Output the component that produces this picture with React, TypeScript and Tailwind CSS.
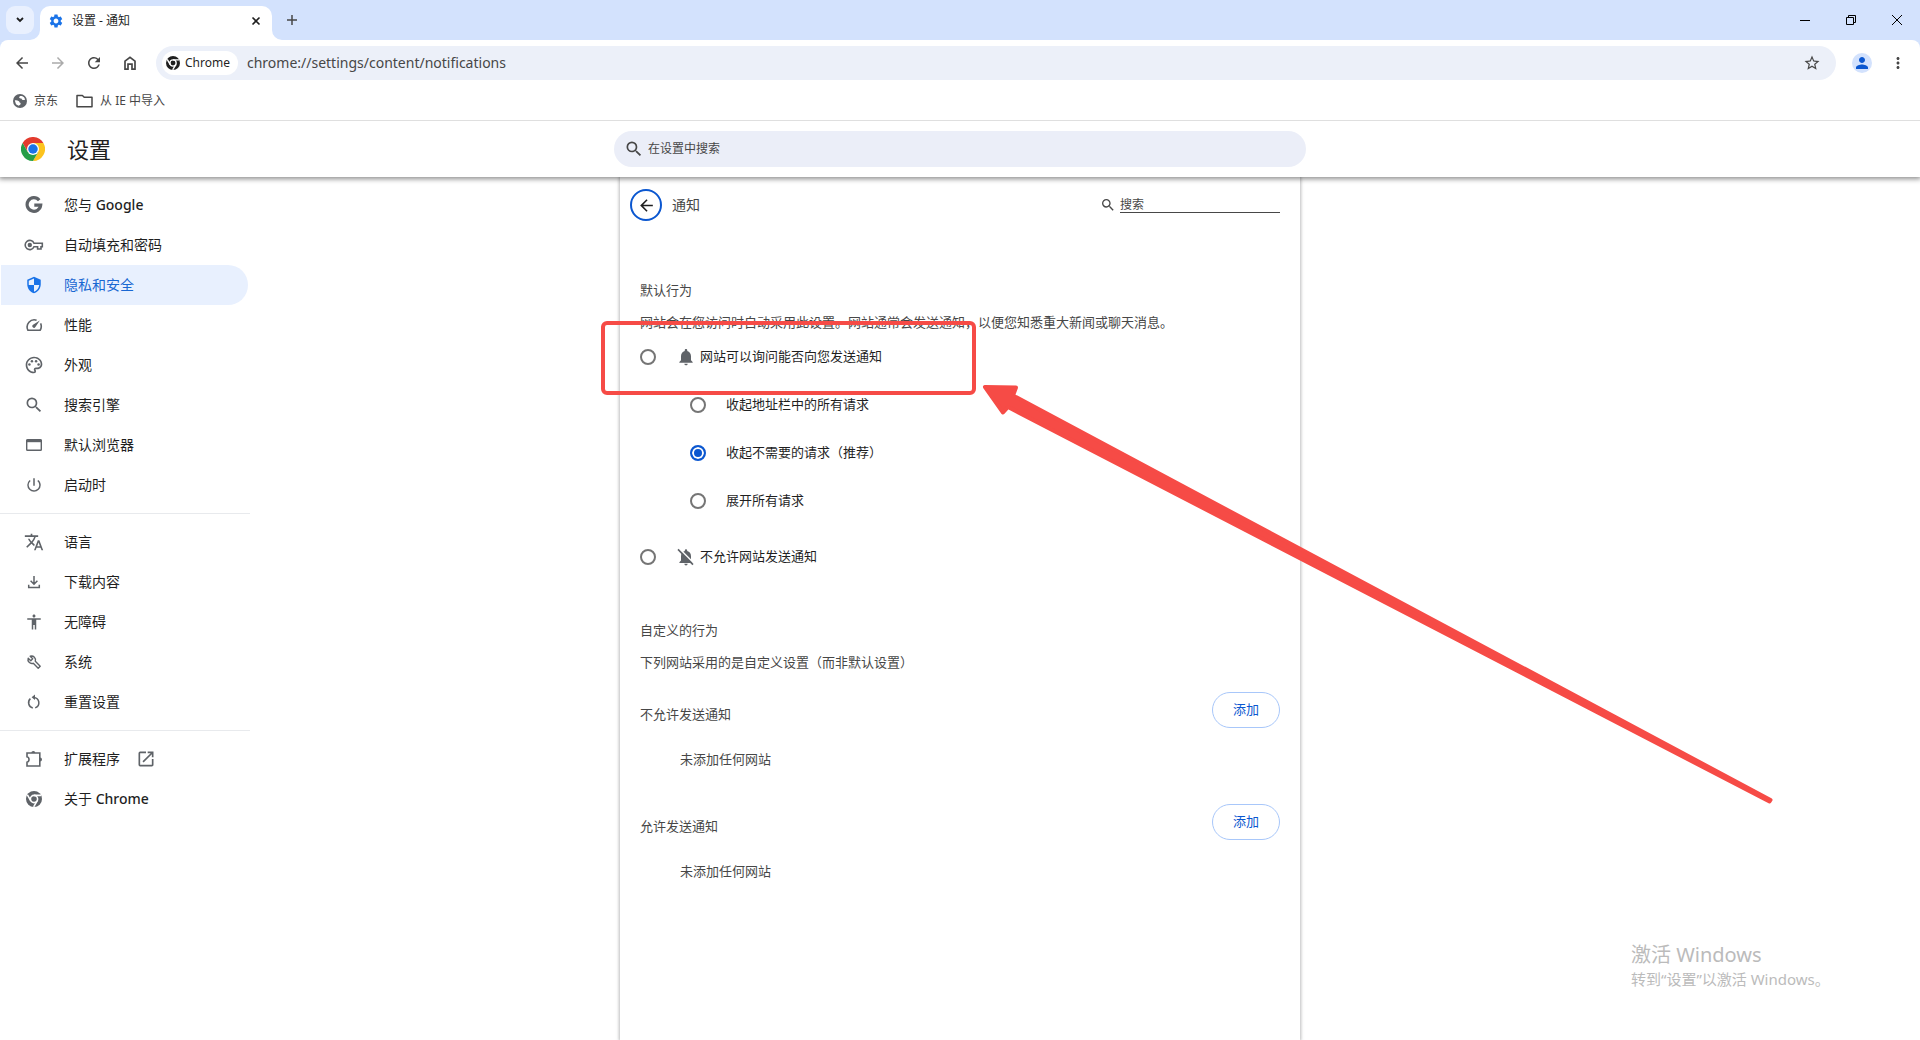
import { useState } from 'react'
import type { ReactNode } from 'react'
import {
  MdAccessibility,
  MdArrowBack,
  MdArrowForward,
  MdMoreVert,
  MdNotifications,
  MdOpenInNew,
  MdOutlinePalette,
  MdPerson,
  MdPowerSettingsNew,
  MdRefresh,
  MdSearch,
  MdSecurity,
  MdSettings,
  MdStarBorder,
  MdTranslate
} from 'react-icons/md'

interface MenuItem {
  id: string
  label: string
  latin?: string
  icon: ReactNode
  external?: boolean
}

function ChromeMono({ size }: { size: number }) {
  return (
    <svg width={size} height={size} viewBox="0 0 24 24" fill="none">
      <circle cx="12" cy="12" r="12" fill="currentColor" />
      <circle cx="12" cy="12" r="5.4" stroke="#fff" strokeWidth="2.4" fill="currentColor" />
      <path d="M12 6.6H22.5M7.3 14.7L2.1 5.7M16.7 14.7L11.5 23.7" stroke="#fff" strokeWidth="2.4" />
    </svg>
  )
}

function ChromeLogo() {
  return (
    <svg width="24" height="24" viewBox="0 0 48 48">
      <path d="M24 12h20.8A24 24 0 0 0 3.2 12l10.4 18z" fill="#e33b2e" />
      <path d="M34.4 30 24 48A24 24 0 0 0 44.8 12H24z" fill="#fcc31e" />
      <path d="M13.6 30 3.2 12A24 24 0 0 0 24 48l10.4-18z" fill="#269e48" />
      <circle cx="24" cy="24" r="12" fill="#fff" />
      <circle cx="24" cy="24" r="9.5" fill="#1a73e8" />
    </svg>
  )
}

function GoogleIcon() {
  return (
    <svg width="18" height="18" viewBox="0 0 18 18" fill="none">
      <path d="M14.2 4.2A6.8 6.8 0 1 0 15.7 9.2H9.3" stroke="currentColor" strokeWidth="3.2" />
    </svg>
  )
}

function KeyIcon() {
  return (
    <svg width="20" height="20" viewBox="0 0 20 20" fill="none" stroke="currentColor" strokeWidth="1.6">
      <path d="M10 8.2A4.6 4.6 0 1 0 10 11.8H13.6V14H17V11.8H18.3V8.2Z" />
      <circle cx="5.8" cy="10" r="2.2" fill="currentColor" stroke="none" />
    </svg>
  )
}

function GaugeIcon() {
  return (
    <svg width="18" height="18" viewBox="0 0 18 18" fill="none" stroke="currentColor" strokeWidth="1.6">
      <path d="M11.6 4.2A7.2 7.2 0 0 0 2.9 14.2H15.1A7.2 7.2 0 0 0 15.6 7.4" />
      <path d="M14.8 4.6 10.4 11A1.7 1.7 0 1 1 8 8.7Z" fill="currentColor" stroke="none" />
    </svg>
  )
}

function BrowserIcon() {
  return (
    <svg width="16" height="12" viewBox="0 0 16 12" fill="none" stroke="currentColor">
      <rect x=".7" y=".7" width="14.6" height="10.6" rx=".8" strokeWidth="1.4" />
      <path d="M0 2H16" strokeWidth="2.4" />
    </svg>
  )
}

function DownloadIcon() {
  return (
    <svg width="16" height="16" viewBox="0 0 16 16" fill="none" stroke="currentColor" strokeWidth="1.5">
      <path d="M8 2V10M4.6 6.8 8 10.2 11.4 6.8M2.7 10.8V13.6H13.3V10.8" />
    </svg>
  )
}

function WrenchIcon() {
  return (
    <svg width="16" height="16" viewBox="0 0 16 16" fill="none" stroke="currentColor" strokeWidth="1.4" strokeLinejoin="round">
      <path d="M4.2 2.2A4 4 0 0 1 9.3 7.3L14.2 12.2 12.2 14.2 7.3 9.3A4 4 0 0 1 2.2 4.2L4.8 6.7 6.7 4.8Z" />
    </svg>
  )
}

function ResetIcon() {
  return (
    <svg width="18" height="18" viewBox="0 0 18 18" fill="none" stroke="currentColor" strokeWidth="1.5">
      <path d="M5.4 5.6A5.4 5.4 0 0 0 7.8 14.9M8.6 4.4A5.4 5.4 0 0 1 10.2 14.9" />
      <path d="M10 1.5V7L6.6 4.2Z" fill="currentColor" stroke="none" />
    </svg>
  )
}

function PuzzleIcon() {
  return (
    <svg width="18" height="18" viewBox="0 0 18 18" fill="none">
      <path d="M2 3H14.8V16H2V12.2Q4 11.8 4 9.5T2 6.8Z" stroke="currentColor" strokeWidth="1.6" />
      <path d="M6.3 3A2 2 0 0 1 10.3 3ZM15 7.5A2 2 0 0 1 15 11.5Z" fill="currentColor" />
    </svg>
  )
}

function BellOffIcon() {
  return (
    <svg width="20" height="20" viewBox="0 0 20 20">
      <path
        d="M10 18.4A1.7 1.7 0 0 0 11.7 16.8H8.3A1.7 1.7 0 0 0 10 18.4ZM15 13.6V9.2C15 6.6 13.6 4.6 11.2 4V3.4A1.2 1.2 0 0 0 8.8 3.4V4C6.4 4.6 5 6.6 5 9.2V13.6L3.4 15.2V16H16.6V15.2Z"
        fill="currentColor"
      />
      <path d="M3.2 1.6 18.4 16.8" stroke="#fff" strokeWidth="1.6" />
      <path d="M2 2.4 17 17.6" stroke="currentColor" strokeWidth="1.6" />
    </svg>
  )
}

function GlobeIcon() {
  return (
    <svg width="14" height="14" viewBox="0 0 14 14">
      <circle cx="7" cy="7" r="7" fill="#5f6368" />
      <path
        d="M7.2 2C5.4 3 6.2 4.6 8.4 4.6 8.8 6 10 6.6 12.2 5.6L11 3.2 9 2ZM1.8 6.4C4.4 6 6.4 7 6.6 8.6 8.4 9 7.8 11 5.6 11.8L3 10.2Z"
        fill="#fff"
      />
    </svg>
  )
}

const groups: MenuItem[][] = [
  [
    { id: 'people', label: '您与', latin: 'Google', icon: <GoogleIcon /> },
    { id: 'autofill', label: '自动填充和密码', icon: <KeyIcon /> },
    { id: 'privacy', label: '隐私和安全', icon: <MdSecurity size={18} /> },
    { id: 'performance', label: '性能', icon: <GaugeIcon /> },
    { id: 'appearance', label: '外观', icon: <MdOutlinePalette size={20} /> },
    { id: 'search', label: '搜索引擎', icon: <MdSearch size={20} /> },
    { id: 'browser', label: '默认浏览器', icon: <BrowserIcon /> },
    { id: 'startup', label: '启动时', icon: <MdPowerSettingsNew size={18} /> }
  ],
  [
    { id: 'languages', label: '语言', icon: <MdTranslate size={20} /> },
    { id: 'downloads', label: '下载内容', icon: <DownloadIcon /> },
    { id: 'a11y', label: '无障碍', icon: <MdAccessibility size={18} /> },
    { id: 'system', label: '系统', icon: <WrenchIcon /> },
    { id: 'reset', label: '重置设置', icon: <ResetIcon /> }
  ],
  [
    { id: 'extensions', label: '扩展程序', icon: <PuzzleIcon />, external: true },
    { id: 'help', label: '关于', latin: 'Chrome', icon: <ChromeMono size={16} /> }
  ]
]

function TabStrip() {
  return (
    <div className="flex h-10 items-end bg-[#d3e2fd]">
      <div className="flex w-[30px] justify-start pl-[6px]">
        <button aria-label="搜索标签页" className="mb-[6px] flex h-7 w-7 shrink-0 items-center justify-center rounded-[9px] bg-[#e9f0fe]">
          <svg width="8" height="6" viewBox="0 0 8 6" fill="none" stroke="#1f1f1f" strokeWidth="1.8">
            <path d="M1 1 4 4 7 1" />
          </svg>
        </button>
      </div>
      <svg width="10" height="10" viewBox="0 0 10 10">
        <path d="M10 0V10H0A10 10 0 0 0 10 0Z" fill="#fff" />
      </svg>
      <div className="flex h-[34px] w-[232px] items-center rounded-t-[10px] bg-white pl-2 pr-[11px] pb-[5px] text-xs text-[#1f1f1f]">
        <MdSettings size={16} className="text-[#1a73e8]" />
        <span className="ml-2 flex-1">设置 - 通知</span>
        <button aria-label="关闭标签页">
          <svg width="10" height="10" viewBox="0 0 10 10" stroke="#1f1f1f" strokeWidth="1.6">
            <path d="M1.5 1.5 8.5 8.5M8.5 1.5 1.5 8.5" />
          </svg>
        </button>
      </div>
      <svg width="10" height="10" viewBox="0 0 10 10">
        <path d="M0 0V10H10A10 10 0 0 1 0 0Z" fill="#fff" />
      </svg>
      <button aria-label="新标签页" className="mb-[15px] ml-[5px]">
        <svg width="10" height="10" viewBox="0 0 10 10" stroke="#474747" strokeWidth="1.5">
          <path d="M5 0V10M0 5H10" />
        </svg>
      </button>
      <div className="flex-1" />
      <div className="mb-[15px] mr-[18px] flex gap-9 text-black">
        <button aria-label="最小化">
          <svg width="10" height="10" viewBox="0 0 10 10" fill="currentColor">
            <path d="M0 5H10V6H0Z" />
          </svg>
        </button>
        <button aria-label="还原">
          <svg width="10" height="10" viewBox="0 0 10 10" fill="none" stroke="currentColor">
            <path d="M.5 2.5H7.5V9.5H.5ZM2.5 2.5V.5H9.5V7.5H7.5" />
          </svg>
        </button>
        <button aria-label="关闭">
          <svg width="10" height="10" viewBox="0 0 10 10" stroke="currentColor">
            <path d="M0 0 10 10M10 0 0 10" />
          </svg>
        </button>
      </div>
    </div>
  )
}

function Toolbar() {
  return (
    <div className="bg-[#d3e2fd]">
      <div className="flex h-[46px] items-center rounded-t-lg bg-white text-[#474747]">
        <div className="flex gap-[18px] pl-[13px] pr-[17px]">
          <button aria-label="后退"><MdArrowBack size={18} /></button>
          <button aria-label="前进" className="text-[#ababab]"><MdArrowForward size={18} /></button>
          <button aria-label="重新加载"><MdRefresh size={18} /></button>
          <button aria-label="主页">
            <svg width="18" height="18" viewBox="0 0 18 18" fill="none" stroke="currentColor" strokeWidth="1.7">
              <path d="M4 7.2 9 3.3 14 7.2V15.2H11V10.2H7V15.2H4Z" />
            </svg>
          </button>
        </div>
        <div className="flex h-[34px] flex-1 items-center rounded-full bg-[#ecf0f9] pl-[6px] pr-[15px]">
          <button className="flex h-6 items-center rounded-full bg-white pl-1 pr-2 text-xs text-[#1f1f1f]">
            <ChromeMono size={14} />
            <span className="ml-[5px]">Chrome</span>
          </button>
          <input
            aria-label="地址"
            className="ml-[9px] min-w-0 flex-1 bg-transparent text-sm text-[#474747] outline-none"
            defaultValue="chrome://settings/content/notifications"
          />
          <button aria-label="为此标签页添加书签"><MdStarBorder size={18} /></button>
        </div>
        <button aria-label="个人资料" className="ml-4 flex h-5 w-5 items-center justify-center rounded-full bg-[#d3e2fd] text-[#0b57d0]">
          <MdPerson size={18} />
        </button>
        <button aria-label="更多" className="ml-[17px] mr-[13px]"><MdMoreVert size={18} /></button>
      </div>
    </div>
  )
}

function BookmarksBar() {
  return (
    <nav className="flex h-[35px] items-center gap-[18px] border-b border-[#dfdfdf] pb-1 pl-[13px] text-xs text-[#474747]">
      <a href="#jd" className="flex items-center gap-[7px]">
        <GlobeIcon />
        京东
      </a>
      <a href="#ie" className="flex items-center gap-[7px]">
        <svg width="17" height="14" viewBox="0 0 17 14" fill="none" stroke="currentColor" strokeWidth="1.5">
          <path d="M1 1.5H6.4L8.2 3.3H16V12.7H1Z" strokeLinejoin="round" />
        </svg>
        从 IE 中导入
      </a>
    </nav>
  )
}

function Sidebar() {
  return (
    <nav className="w-[250px] pt-2 text-sm text-[#1f1f1f]">
      {groups.map((group, i) => (
        <ul key={i} className={i > 0 ? 'mt-2 border-t border-[#e8eaed] pt-2' : ''}>
          {group.map(item => (
            <li key={item.id}>
              <a
                href={`#${item.id}`}
                className={`ml-px mr-[2px] flex h-10 items-center rounded-r-full pl-[23px] ${
                  item.id === 'privacy' ? 'bg-[#e8f0fe] text-[#1967d2]' : ''
                }`}
              >
                <span className={`flex w-5 justify-center ${item.id === 'privacy' ? 'text-[#1a73e8]' : 'text-[#5f6368]'}`}>
                  {item.icon}
                </span>
                <span className="ml-5 pb-px">
                  {item.label}
                  {item.latin && <span className="font-medium"> {item.latin}</span>}
                </span>
                {item.external && <MdOpenInNew size={20} className="ml-4 text-[#5f6368]" />}
              </a>
            </li>
          ))}
        </ul>
      ))}
    </nav>
  )
}

interface RadioProps {
  id: string
  name: string
  label: string
  checked: boolean
  onChange: () => void
  icon?: ReactNode
}

function RadioRow({ id, name, label, checked, onChange, icon }: RadioProps) {
  return (
    <div className="flex h-12 items-center">
      <input
        type="radio"
        id={id}
        name={name}
        checked={checked}
        onChange={onChange}
        className="h-4 w-4 appearance-none rounded-full border-2 border-[#757575] bg-white checked:border-[#0b57d0] checked:bg-[#0b57d0] checked:shadow-[inset_0_0_0_2px_#fff]"
      />
      <label htmlFor={id} className="ml-5 flex items-center text-[#1f1f1f]">
        {icon && <span className="mr-1 flex w-5 justify-center text-[#5f6368]">{icon}</span>}
        <span className="pb-[2px]">{label}</span>
      </label>
    </div>
  )
}

function SiteList({ title }: { title: string }) {
  return (
    <section className="h-28">
      <div className="flex h-12 items-start justify-between">
        <h3 className="pt-3">{title}</h3>
        <button className="h-9 rounded-full border border-[#a8c7fa] px-5 pb-[2px] text-[#0b57d0]">添加</button>
      </div>
      <p className="pl-10 pt-[9px]">未添加任何网站</p>
    </section>
  )
}

function NotificationsPanel() {
  const [mode, setMode] = useState('')
  const [prompt, setPrompt] = useState('quiet')

  return (
    <main className="w-full max-w-[680px] px-5 pt-2 text-[13px] leading-5 text-[#474747] shadow-[0_0_3px_1px_rgba(60,64,67,0.35)]">
      <div className="-ml-[10px] flex h-10 items-center">
        <button aria-label="返回" className="flex h-8 w-8 items-center justify-center rounded-full border-2 border-[#0b57d0] text-[#1f1f1f]">
          <MdArrowBack size={19} />
        </button>
        <h1 className="ml-[10px] flex-1 text-sm">通知</h1>
        <label htmlFor="site-search" aria-label="搜索" className="mr-1"><MdSearch size={16} /></label>
        <input
          id="site-search"
          placeholder="搜索"
          className="h-4 w-40 border-b border-[#474747] text-xs leading-4 outline-none placeholder:text-[#474747]"
        />
      </div>

      <h2 className="mt-[55px]">默认行为</h2>
      <p className="mb-px mt-3">网站会在您访问时自动采用此设置。网站通常会发送通知，以便您知悉重大新闻或聊天消息。</p>
      <RadioRow
        id="ask"
        name="mode"
        label="网站可以询问能否向您发送通知"
        checked={mode === 'ask'}
        onChange={() => setMode('ask')}
        icon={<MdNotifications size={20} />}
      />
      <div className="pl-[50px]">
        <RadioRow id="collapse" name="prompt" label="收起地址栏中的所有请求" checked={prompt === 'collapse'} onChange={() => setPrompt('collapse')} />
        <RadioRow id="quiet" name="prompt" label="收起不需要的请求（推荐）" checked={prompt === 'quiet'} onChange={() => setPrompt('quiet')} />
        <RadioRow id="expand" name="prompt" label="展开所有请求" checked={prompt === 'expand'} onChange={() => setPrompt('expand')} />
      </div>
      <div className="mt-2">
        <RadioRow
          id="block"
          name="mode"
          label="不允许网站发送通知"
          checked={mode === 'block'}
          onChange={() => setMode('block')}
          icon={<BellOffIcon />}
        />
      </div>

      <h2 className="mt-[39px]">自定义的行为</h2>
      <p className="mb-5 mt-3">下列网站采用的是自定义设置（而非默认设置）</p>
      <SiteList title="不允许发送通知" />
      <SiteList title="允许发送通知" />
    </main>
  )
}

// Red frame and arrow drawn over the page
function Annotation() {
  return (
    <svg className="pointer-events-none absolute left-0 top-0" width="1800" height="820" viewBox="0 0 1800 820" fill="#f64b46">
      <rect x="603" y="323" width="371" height="70" rx="4" fill="none" stroke="#f64b46" strokeWidth="4" />
      <path
        d="M985 387 1016 387.5 1013 395.5 1770.5 800 1769.5 801.5 1008 407 1003 412.5Z"
        stroke="#f64b46"
        strokeWidth="4"
        strokeLinejoin="round"
      />
    </svg>
  )
}

export default function App() {
  return (
    <div className="relative flex min-h-screen flex-col overflow-hidden bg-white font-['Noto_Sans','Noto_Sans_CJK_SC',sans-serif]">
      <TabStrip />
      <Toolbar />
      <BookmarksBar />

      <header className="z-10 flex h-14 items-center bg-white shadow-[0_1px_5px_1px_rgba(0,0,0,0.45)] [clip-path:inset(0_0_-10px_0)]">
        <div className="flex-1">
          <div className="flex items-center pl-[21px]">
            <ChromeLogo />
            <span className="ml-[22px] text-[22px] text-[#1f1f1f]">设置</span>
          </div>
        </div>
        <div className="flex h-9 w-full max-w-[692px] items-center rounded-full bg-[#ebeef8] pl-[10px] text-[#474747]">
          <label htmlFor="settings-search" aria-label="在设置中搜索"><MdSearch size={20} /></label>
          <input
            id="settings-search"
            placeholder="在设置中搜索"
            className="ml-1 flex-1 bg-transparent text-xs outline-none placeholder:text-[#474747]"
          />
        </div>
        <div className="flex-1" />
      </header>

      <div className="flex flex-1">
        <div className="flex-1"><Sidebar /></div>
        <NotificationsPanel />
        <div className="flex-1" />
      </div>

      <Annotation />

      <div className="pointer-events-none absolute bottom-[51px] right-[88px] w-[201px] text-[#bbbbbb]">
        <div className="text-xl leading-7">激活 Windows</div>
        <div className="whitespace-nowrap text-[15px] leading-5">转到“设置”以激活 Windows。</div>
      </div>
    </div>
  )
}
